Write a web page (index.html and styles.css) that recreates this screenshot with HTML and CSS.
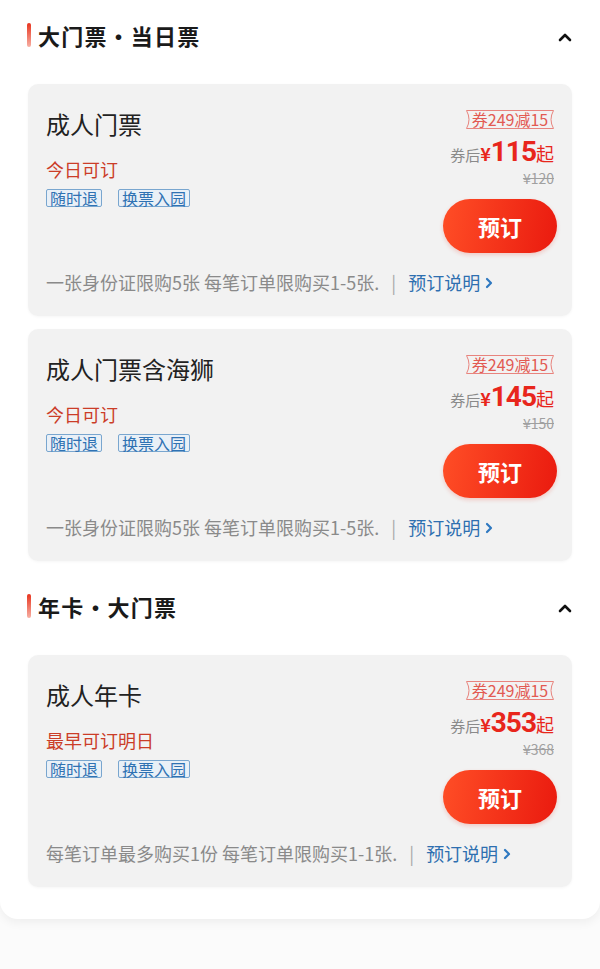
FILE: index.html
```html
<!DOCTYPE html>
<html lang="zh-CN">
<head>
<meta charset="utf-8">
<title>门票</title>
<link rel="stylesheet" href="styles.css">
</head>
<body>
<div class="panel">
  <div class="section-head">
    <span class="bar"></span>
    <h2 class="section-title">大门票・当日票</h2>
    <svg class="chev-up" width="14" height="10" viewBox="0 0 14 10"><path d="M2 8 L7 3 L12 8" fill="none" stroke="#111" stroke-width="2.6" stroke-linecap="round" stroke-linejoin="round"/></svg>
  </div>

  <div class="card">
    <div class="card-top">
      <div class="info">
        <div class="name">成人门票</div>
        <div class="status">今日可订</div>
        <div class="tags"><span class="tag">随时退</span><span class="tag">换票入园</span></div>
      </div>
      <div class="buy">
        <span class="coupon"><svg class="coupon-edge" width="88" height="19" viewBox="0 0 88 19"><path d="M0.5 0.5 H87.5 Q82.5 9.5 87.5 18.5 H0.5 Q5.5 9.5 0.5 0.5 Z" fill="none" stroke="#e8847e" stroke-width="1"/></svg>券249减15</span>
        <div class="price"><span class="pre">券后</span><span class="yen">¥</span><span class="num">115</span><span class="qi">起</span></div>
        <div class="orig">¥120</div>
        <button class="btn">预订</button>
      </div>
    </div>
    <div class="note">一张身份证限购5张 每笔订单限购买1-5张.<span class="sep">|</span><span class="link">预订说明<svg class="chev-r" width="10" height="14" viewBox="0 0 10 14"><path d="M3 3 L7 7 L3 11" fill="none" stroke="#2e78c0" stroke-width="2.2" stroke-linecap="round" stroke-linejoin="round"/></svg></span></div>
  </div>

  <div class="card">
    <div class="card-top">
      <div class="info">
        <div class="name">成人门票含海狮</div>
        <div class="status">今日可订</div>
        <div class="tags"><span class="tag">随时退</span><span class="tag">换票入园</span></div>
      </div>
      <div class="buy">
        <span class="coupon"><svg class="coupon-edge" width="88" height="19" viewBox="0 0 88 19"><path d="M0.5 0.5 H87.5 Q82.5 9.5 87.5 18.5 H0.5 Q5.5 9.5 0.5 0.5 Z" fill="none" stroke="#e8847e" stroke-width="1"/></svg>券249减15</span>
        <div class="price"><span class="pre">券后</span><span class="yen">¥</span><span class="num">145</span><span class="qi">起</span></div>
        <div class="orig">¥150</div>
        <button class="btn">预订</button>
      </div>
    </div>
    <div class="note">一张身份证限购5张 每笔订单限购买1-5张.<span class="sep">|</span><span class="link">预订说明<svg class="chev-r" width="10" height="14" viewBox="0 0 10 14"><path d="M3 3 L7 7 L3 11" fill="none" stroke="#2e78c0" stroke-width="2.2" stroke-linecap="round" stroke-linejoin="round"/></svg></span></div>
  </div>

  <div class="section-head second">
    <span class="bar"></span>
    <h2 class="section-title">年卡・大门票</h2>
    <svg class="chev-up" width="14" height="10" viewBox="0 0 14 10"><path d="M2 8 L7 3 L12 8" fill="none" stroke="#111" stroke-width="2.6" stroke-linecap="round" stroke-linejoin="round"/></svg>
  </div>

  <div class="card last">
    <div class="card-top">
      <div class="info">
        <div class="name">成人年卡</div>
        <div class="status">最早可订明日</div>
        <div class="tags"><span class="tag">随时退</span><span class="tag">换票入园</span></div>
      </div>
      <div class="buy">
        <span class="coupon"><svg class="coupon-edge" width="88" height="19" viewBox="0 0 88 19"><path d="M0.5 0.5 H87.5 Q82.5 9.5 87.5 18.5 H0.5 Q5.5 9.5 0.5 0.5 Z" fill="none" stroke="#e8847e" stroke-width="1"/></svg>券249减15</span>
        <div class="price"><span class="pre">券后</span><span class="yen">¥</span><span class="num">353</span><span class="qi">起</span></div>
        <div class="orig">¥368</div>
        <button class="btn">预订</button>
      </div>
    </div>
    <div class="note">每笔订单最多购买1份 每笔订单限购买1-1张.<span class="sep">|</span><span class="link">预订说明<svg class="chev-r" width="10" height="14" viewBox="0 0 10 14"><path d="M3 3 L7 7 L3 11" fill="none" stroke="#2e78c0" stroke-width="2.2" stroke-linecap="round" stroke-linejoin="round"/></svg></span></div>
  </div>
</div>
</body>
</html>
```

FILE: styles.css
```css
* { box-sizing: border-box; }
html, body { margin: 0; padding: 0; background: #fbfbfb; }
body {
  font-family: "Noto Sans CJK SC", "Noto Sans", sans-serif;
  color: #222;
  height: 969px;
  overflow: hidden;
}
.panel {
  background: #fff;
  padding: 21px 28px 32px;
  border-radius: 0 0 18px 18px;
  box-shadow: 0 4px 10px rgba(0,0,0,0.05);
}
.section-head {
  display: flex;
  align-items: center;
  height: 28px;
  margin-bottom: 35px;
  margin-left: -1px;
}
.section-head.second { margin-top: 31px; margin-bottom: 35px; }
.bar {
  width: 4px;
  height: 24px;
  border-radius: 2px;
  background: linear-gradient(#e8341e, #f7b0a4);
  margin-right: 7px;
}
.section-title {
  margin: 0;
  font-size: 22px;
  font-weight: 700;
  line-height: 28px;
  color: #1a1a1a;
  letter-spacing: 1.2px;
  flex: 1;
}
.chev-up { margin-right: 0; margin-top: 4px; }
.card {
  background: #f2f2f2;
  border-radius: 10px;
  padding: 26px 15px 22px 18px;
  margin-bottom: 13px;
  box-shadow: 0 1px 3px rgba(0,0,0,0.04);
}
.card.last { margin-bottom: 0; }
.card-top { display: flex; justify-content: space-between; }
.info { display: flex; flex-direction: column; align-items: flex-start; }
.name { font-size: 24px; line-height: 28px; color: #222; }
.status { font-size: 18px; line-height: 24px; color: #cb3d28; margin-top: 19px; }
.tags { display: flex; gap: 16px; margin-top: 8px; }
.tag {
  font-size: 16px;
  line-height: 16px;
  height: 18px;
  padding: 0 3px;
  color: #2f72b3;
  border: 1px solid #79a6cf;
  border-radius: 2px;
  background: #e9f0f7;
}
.buy { display: flex; flex-direction: column; align-items: flex-end; }
.coupon {
  position: relative;
  font-size: 16px;
  line-height: 19px;
  height: 19px;
  width: 88px;
  margin-right: 3px;
  text-align: center;
  color: #e25a52;
}
.coupon-edge { position: absolute; left: 0; top: 0; }
.price {
  margin-top: 10px;
  line-height: 26px;
  height: 26px;
  margin-right: 3px;
  display: flex;
  align-items: baseline;
  color: #e8261c;
}
.pre { font-size: 15px; color: #8a8a8a; }
.yen { font-size: 18px; font-weight: 700; }
.num { font-size: 28px; font-weight: 700; font-family: "Roboto", "Noto Sans", sans-serif; letter-spacing: -1px; }
.qi { font-size: 18px; }
.orig {
  margin-top: 5px;
  font-size: 14px;
  line-height: 16px;
  color: #a0a0a0;
  text-decoration: line-through;
  margin-right: 3px;
}
.btn {
  margin-top: 13px;
  width: 114px;
  height: 54px;
  border: none;
  border-radius: 27px;
  background: linear-gradient(100deg, #ff4e26, #ea1a0f);
  color: #fff;
  font-family: inherit;
  font-size: 22px;
  font-weight: 700;
  box-shadow: 0 2px 4px rgba(230,40,20,0.2);
}
.note {
  margin-top: 18px;
  font-size: 18px;
  line-height: 23px;
  color: #8a8a8a;
  display: flex;
  align-items: center;
  white-space: nowrap;
}
.sep { margin: 0 12px 0 12px; color: #aaa; }
.link { color: #2e6fb0; display: inline-flex; align-items: center; }
.chev-r { margin-left: 4px; }
```
